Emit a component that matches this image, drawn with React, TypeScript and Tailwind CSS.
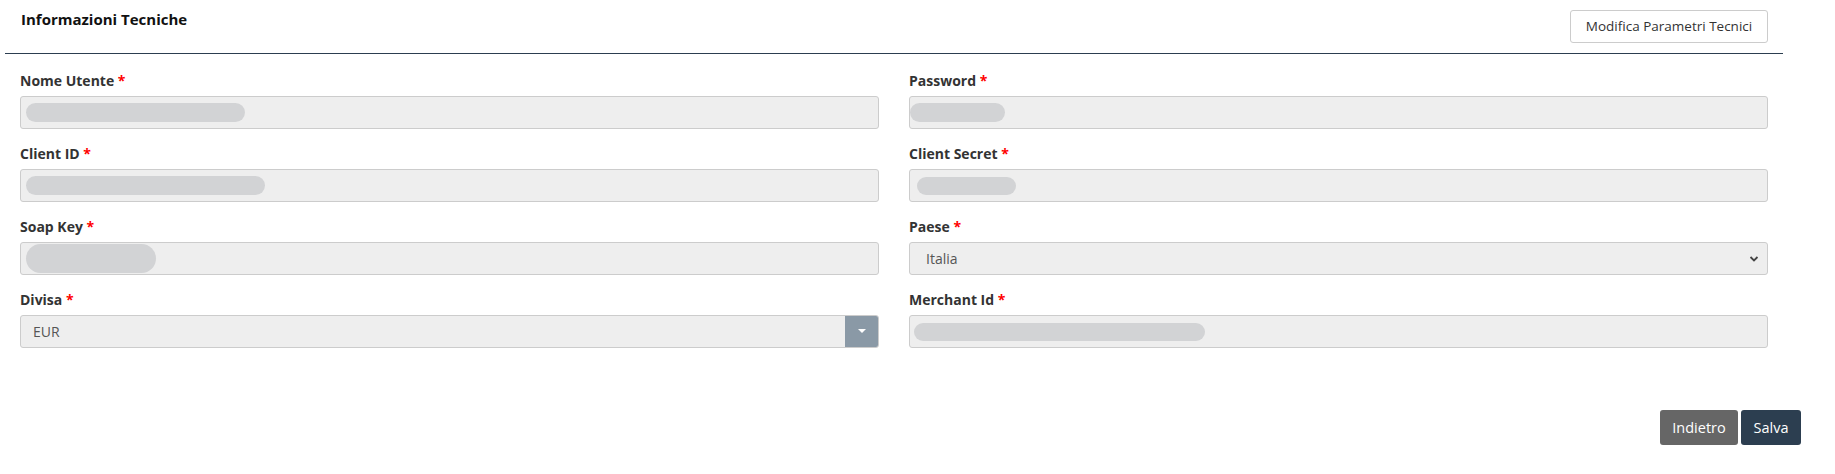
import React from "react";

const Blob = ({ w, h, className = "" }: { w: number; h: number; className?: string }) => (
  <div
    className={`bg-[#d2d3d5] rounded-full ${className}`}
    style={{ width: w, height: h }}
  />
);

const Label = ({ text }: { text: string }) => (
  <div className="text-[14px] leading-[20px] font-bold text-[#333333] mb-[5px]">
    {text} <span className="text-[#ff0000]">*</span>
  </div>
);

const Input = ({ children }: { children?: React.ReactNode }) => (
  <div className="h-[33px] bg-[#eeeeee] border border-[#cccccc] rounded-[3px] flex items-center relative overflow-hidden">
    {children}
  </div>
);

export default function App() {
  return (
    <div
      className="w-[1835px] h-[474px] bg-white"
      style={{ fontFamily: '"Open Sans", "Noto Sans", sans-serif' }}
    >
      <div className="ml-[5px] w-[1778px] border-b border-[#2c3e50] h-[54px] flex justify-between items-start pl-[16px] pr-[15px]">
        <div className="pt-[9px] text-[15px] leading-[20px] font-bold text-[#111111]">
          Informazioni Tecniche
        </div>
        <button className="mt-[10px] h-[33px] w-[198px] border border-[#cccccc] rounded-[3px] bg-white text-[13.5px] text-[#333333]">
          Modifica Parametri Tecnici
        </button>
      </div>

      <div className="ml-[20px] w-[1748px] pt-[17px] grid grid-cols-2 gap-x-[30px] gap-y-[15px]">
        <div>
          <Label text="Nome Utente" />
          <Input>
            <Blob w={219} h={19} className="ml-[5px]" />
          </Input>
        </div>
        <div>
          <Label text="Password" />
          <Input>
            <Blob w={95} h={19} className="ml-[0px]" />
          </Input>
        </div>
        <div>
          <Label text="Client ID" />
          <Input>
            <Blob w={239} h={19} className="ml-[5px]" />
          </Input>
        </div>
        <div>
          <Label text="Client Secret" />
          <Input>
            <Blob w={99} h={18} className="ml-[7px]" />
          </Input>
        </div>
        <div>
          <Label text="Soap Key" />
          <Input>
            <Blob w={130} h={29} className="ml-[5px]" />
          </Input>
        </div>
        <div>
          <Label text="Paese" />
          <Input>
            <span className="pl-[16px] text-[14px] text-[#555555]">Italia</span>
            <svg
              className="absolute right-[8px] top-[12px]"
              width="10"
              height="8"
              viewBox="0 0 10 8"
            >
              <path d="M1.5 2 L5 5.5 L8.5 2" stroke="#444" strokeWidth="1.8" fill="none" />
            </svg>
          </Input>
        </div>
        <div>
          <Label text="Divisa" />
          <Input>
            <span className="pl-[12px] text-[14px] text-[#555555]">EUR</span>
            <div className="absolute right-0 top-0 bottom-0 w-[33px] bg-[#8a99a6] flex items-center justify-center">
              <svg width="8" height="5" viewBox="0 0 8 5">
                <path d="M0 0 L8 0 L4 4 Z" fill="#ffffff" />
              </svg>
            </div>
          </Input>
        </div>
        <div>
          <Label text="Merchant Id" />
          <Input>
            <Blob w={291} h={18} className="ml-[4px]" />
          </Input>
        </div>
      </div>

      <div className="flex justify-end gap-[3px] pr-[34px] mt-[62px]">
        <button className="h-[35px] w-[78px] rounded-[3px] bg-[#666666] text-white text-[14.5px]">
          Indietro
        </button>
        <button className="h-[35px] w-[60px] rounded-[3px] bg-[#2c3e50] text-white text-[14.5px]">
          Salva
        </button>
      </div>
    </div>
  );
}
